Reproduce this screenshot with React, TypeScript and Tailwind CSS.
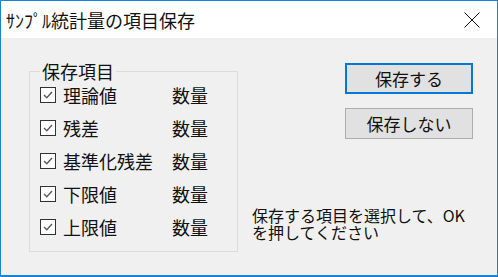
import React from "react";

const font = { fontFamily: '"Noto Sans CJK JP", "Noto Sans", sans-serif' };

interface SaveItem {
  id: string;
  label: string;
  kind: string;
}

const saveItems: SaveItem[] = [
  { id: "theory", label: "理論値", kind: "数量" },
  { id: "resid", label: "残差", kind: "数量" },
  { id: "stdResid", label: "基準化残差", kind: "数量" },
  { id: "lower", label: "下限値", kind: "数量" },
  { id: "upper", label: "上限値", kind: "数量" },
];

function CheckBox() {
  return (
    <div className="w-[16px] h-[16px] shrink-0 border border-[#333333] bg-white flex items-center justify-center">
      <svg width="12" height="12" viewBox="0 0 12 12">
        <path d="M2 6 L4.8 8.8 L10 3" fill="none" stroke="#5a5a5a" strokeWidth="1.4" />
      </svg>
    </div>
  );
}

export default function App() {
  return (
    <div
      className="w-[498px] h-[277px] flex flex-col border border-b-2 border-[#1883d7] bg-[#f0f0f0] text-[#111111]"
      style={font}
    >
      {/* title bar */}
      <div className="h-[37px] bg-white flex items-center justify-between pl-[5px] pr-[17px] shrink-0">
        <span className="text-[18px] leading-none">ｻﾝﾌﾟﾙ統計量の項目保存</span>
        <svg width="16" height="16" viewBox="0 0 16 16">
          <path d="M0.5 0.5 L15.5 15.5 M15.5 0.5 L0.5 15.5" stroke="#111111" strokeWidth="1" />
        </svg>
      </div>

      <div className="flex-1 flex">
        {/* group box */}
        <div className="relative ml-[28px] mt-[33px] w-[209px] h-[181px] border border-[#dcdcdc] pl-[10px] pt-[6px]">
          <span className="absolute left-[10px] -top-[12px] px-[2px] bg-[#f0f0f0] text-[18px] leading-[22px]">
            保存項目
          </span>
          {saveItems.map((item) => (
            <div key={item.id} className="h-[33px] flex items-center">
              <CheckBox />
              <span className="ml-[7px] w-[109px] text-[18px] leading-none">{item.label}</span>
              <span className="text-[18px] leading-none">{item.kind}</span>
            </div>
          ))}
        </div>

        {/* right side */}
        <div className="ml-[14px] flex-1 flex flex-col pt-[25px]">
          <div className="ml-[93px] flex flex-col gap-[14px]">
            <button className="w-[128px] h-[31px] border-2 border-[#0078d7] bg-[#e1e1e1] text-[17px] leading-none">
              保存する
            </button>
            <button className="w-[128px] h-[31px] border border-[#adadad] bg-[#e1e1e1] text-[17px] leading-none">
              保存しない
            </button>
          </div>
          <p className="mt-[68px] text-[16px] leading-[17px]">
            保存する項目を選択して、OK
            <br />
            を押してください
          </p>
        </div>
      </div>
    </div>
  );
}
